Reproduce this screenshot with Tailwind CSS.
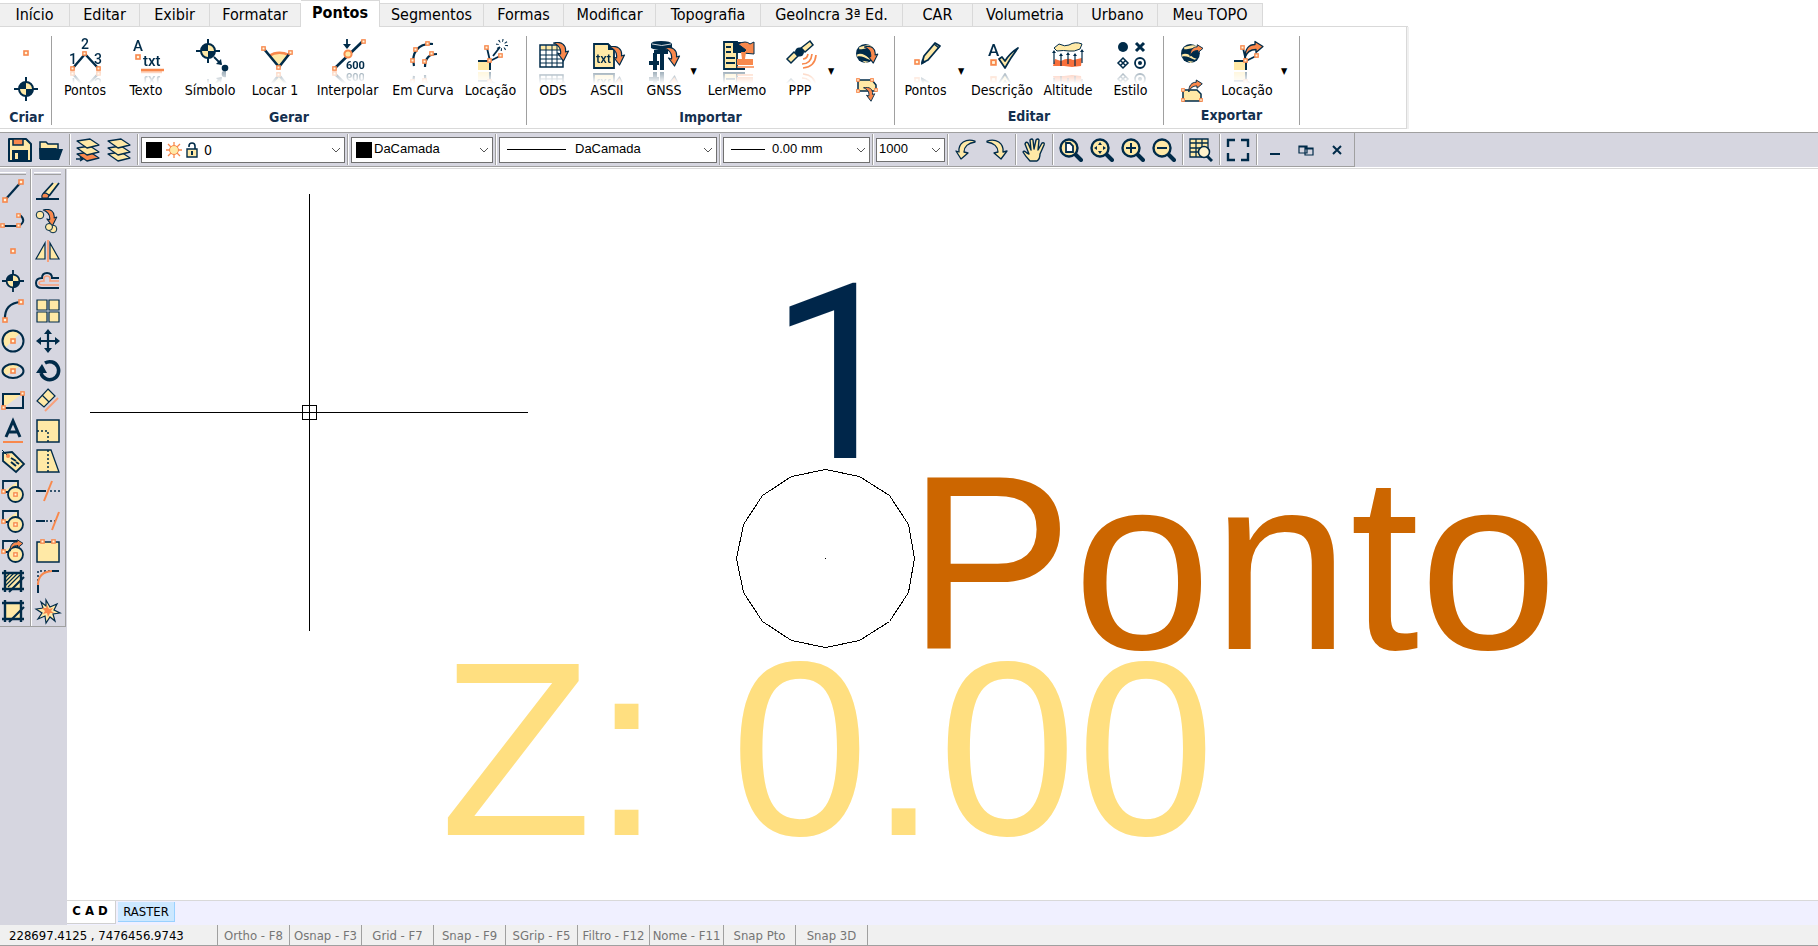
<!DOCTYPE html>
<html lang="pt-BR">
<head>
<meta charset="utf-8">
<title>Topografia CAD - Pontos</title>
<script src="https://cdn.jsdelivr.net/npm/@tailwindcss/browser@4"></script>
</head>
<body class="flex h-screen flex-col overflow-hidden bg-white font-['DejaVu_Sans_Condensed','DejaVu_Sans',sans-serif] text-sm text-black">

<!-- Icon library -->
<svg class="hidden" aria-hidden="true">
  <defs>
    <symbol id="sq" viewBox="0 0 6 6"><rect x="1" y="1" width="4" height="4" fill="#fff6dc" stroke="#f8884c" stroke-width="1.6"/></symbol>
    <symbol id="target" viewBox="0 0 24 24"><path d="M12 0v24M0 12h24" stroke="#002b49" stroke-width="2"/><circle cx="12" cy="12" r="7" fill="#ffe9a6" stroke="#002b49" stroke-width="2"/><path d="M12 12V5a7 7 0 0 0-7 7zM12 12v7a7 7 0 0 0 7-7z" fill="#002b49"/></symbol>
    <symbol id="arrow-down" viewBox="0 0 16 20"><path d="M0 1C8-1 13 3 12 10l3-1-5 10-6-8 3 1C8 6 5 3 0 1z" fill="#f8884c" stroke="#002b49" stroke-width="1.2" stroke-linejoin="round"/></symbol>
    <symbol id="arrow-right" viewBox="0 0 20 18"><path d="M1 17C1 8 5 4 11 4V1l8 5-7 6V9C7 9 3 11 1 17z" fill="#f8884c" stroke="#002b49" stroke-width="1.3" stroke-linejoin="round"/></symbol>
    <symbol id="globe" viewBox="0 0 22 22"><circle cx="10" cy="11" r="9" fill="#002b49"/><path d="M4 5c4-1 8-3 12-1l1 2C12 5 8 7 4 7zM2 12c4-2 8 1 11 3l3 1-2 1C9 15 6 13 2 14zM7 18l6 1-3 1z" fill="#ffe9a6"/></symbol>
    <symbol id="zoom" viewBox="0 0 24 24"><path d="M16 16l6 6" stroke="#002b49" stroke-width="4" stroke-linecap="round"/><circle cx="10" cy="10" r="8.500" fill="#ffe9a6" stroke="#002b49" stroke-width="2.4"/></symbol>
    <symbol id="shapes" viewBox="0 0 24 24"><path d="M2 2h15v11H2z" fill="#dcdce4" stroke="#002b49" stroke-width="1.8"/><path d="M3 12L16 3v9z" fill="#ffe9a6"/><circle cx="14.500" cy="15.500" r="7.500" fill="#ffe9a6" stroke="#002b49" stroke-width="1.8"/><use href="#sq" x="12" y="13" width="5" height="5"/><use href="#sq" x="0" y="10" width="5" height="5"/></symbol>
    <symbol id="sheet" viewBox="0 0 24 24"><path d="M1 3l13-2 9 6-12 3z" fill="#ffe9a6" stroke="#002b49" stroke-width="1.3" stroke-linejoin="round"/></symbol>
    <symbol id="corner" viewBox="0 0 32 32"><path d="M3 23h12v8H3z" fill="#ffe9a6"/><path d="M3 22h12v9" fill="none" stroke="#002b49" stroke-width="2"/><path d="M12 9l3 13 10-5" fill="none" stroke="#002b49" stroke-width="1.800"/><use href="#sq" x="9" y="6" width="5" height="5"/><use href="#sq" x="12" y="19" width="5" height="5"/><use href="#sq" x="23" y="14" width="5" height="5"/></symbol>
    <symbol id="hatch-frame" viewBox="0 0 24 24"><path d="M4 4h15v15H4z" fill="#ffe9a6"/><path d="M4 1v22M20 1v22M1 4h22M1 20h22" stroke="#002b49" stroke-width="2.4"/><path d="M8 23L23 8" stroke="#002b49" stroke-width="2.200"/></symbol>
  </defs>
</svg>

<header class="shrink-0">
  <!-- Tabs -->
  <nav class="flex h-[27px] items-end text-base/6 [&>button]:h-6 [&>button]:shrink-0 [&>button]:pb-px [&>button]:leading-5 [&>button]:whitespace-nowrap [&>button]:border-t [&>button]:border-r [&>button]:border-[#d9d9d9]" aria-label="Menu">
    <button class="w-[70px] border-b bg-[#f0f0f0]">Início</button>
    <button class="w-[70px] border-b bg-[#f0f0f0]">Editar</button>
    <button class="w-[70px] border-b bg-[#f0f0f0]">Exibir</button>
    <button class="w-[91px] border-b bg-[#f0f0f0]">Formatar</button>
    <div class="h-[27px] w-[79px] shrink-0 border-t border-r border-[#d9d9d9] bg-white"><button class="size-full pb-[2px] font-bold">Pontos</button></div>
    <button class="w-[104px] border-b bg-[#f0f0f0]">Segmentos</button>
    <button class="w-[80px] border-b bg-[#f0f0f0]">Formas</button>
    <button class="w-[92px] border-b bg-[#f0f0f0]">Modificar</button>
    <button class="w-[105px] border-b bg-[#f0f0f0]">Topografia</button>
    <button class="w-[142px] border-b bg-[#f0f0f0]">GeoIncra 3ª Ed.</button>
    <button class="w-[70px] border-b bg-[#f0f0f0]">CAR</button>
    <button class="w-[105px] border-b bg-[#f0f0f0]">Volumetria</button>
    <button class="w-[80px] border-b bg-[#f0f0f0]">Urbano</button>
    <button class="w-[105px] border-b bg-[#f0f0f0]">Meu TOPO</button>
    <span class="w-[145px] shrink-0 border-b border-[#d9d9d9]"></span>
  </nav>

  <!-- Ribbon -->
  <div class="w-fit border-r-2 border-[#f0f0f0]">
  <div class="flex h-[102px] w-[1407px] border-r border-b border-[#d9d9d9] pt-[9px] pb-[3px] [&_h2]:text-center [&_h2]:text-sm/4 [&_h2]:font-bold [&_h2]:text-[#14304f] [&>section]:flex [&>section]:flex-col [&>section]:justify-between [&>section]:border-r [&>section]:border-[#a0a0a0] [&_button]:flex [&_button]:shrink-0 [&_button]:flex-col [&_button]:items-center [&_button]:whitespace-nowrap [&_button]:leading-4 [&_svg]:overflow-visible">
    <section class="w-[52px]">
      <div class="flex flex-col items-center gap-[13px] pt-1">
        <button aria-label="Ponto"><svg class="size-6" viewBox="0 0 24 24"><use href="#sq" x="9" y="10" width="6" height="6"/></svg></button>
        <button aria-label="Símbolo"><svg class="size-6"><use href="#target"/></svg></button>
      </div>
      <h2 class="pl-[2px]">Criar</h2>
    </section>

    <section>
      <div class="flex pt-[3px] [&_svg]:mb-[11px] [&_svg]:size-8 [&_svg]:[-webkit-box-reflect:below_0_linear-gradient(transparent_60%,#00000066)]">
        <button class="w-[66px]"><svg viewBox="0 0 32 32"><path d="M4 29l12-14 13 14" fill="none" stroke="#002b49" stroke-width="2.400"/><g font-family="Roboto" font-size="14" font-weight="500" fill="#002b49"><text x="12" y="10">2</text><text x="0" y="25">1</text><text x="25" y="25">3</text></g><use href="#sq" x="1" y="27" width="5" height="5"/><use href="#sq" x="13" y="12" width="5" height="5"/><use href="#sq" x="27" y="27" width="5" height="5"/></svg>Pontos</button>
        <button class="w-[56px]"><svg viewBox="0 0 32 32"><g font-family="Roboto" fill="#002b49" font-weight="500"><text x="3" y="12" font-size="15">A</text><text x="13" y="27" font-size="15">txt</text></g><use href="#sq" x="5" y="15" width="6" height="6"/><path d="M11 31h23" stroke="#f8884c" stroke-width="2.500"/></svg>Texto</button>
        <button class="w-[72px]"><svg viewBox="0 0 32 32"><use href="#target" x="2" y="0" width="24" height="24"/><path d="M20 18l7 7" stroke="#002b49" stroke-width="1.800"/><path d="M28 26l-6-1 5-5z" fill="#002b49"/><circle cx="31" cy="29" r="3.300" fill="#002b49"/></svg>Símbolo</button>
        <button class="w-[58px]"><svg viewBox="0 0 32 32"><path d="M20 28L10 17q9-6 19-1z" fill="#ffe9a6"/><path d="M10 17q9-6 20-1" fill="none" stroke="#f8884c" stroke-width="2.500"/><path d="M5 10l15 18 11-14" fill="none" stroke="#002b49" stroke-width="2.600"/><use href="#sq" x="2" y="7" width="5" height="5"/><use href="#sq" x="17" y="26" width="5" height="5"/><use href="#sq" x="29" y="11" width="5" height="5"/></svg>Locar 1</button>
        <button class="w-[87px]"><svg viewBox="0 0 32 32"><path d="M3 29L31 2" stroke="#002b49" stroke-width="2.600"/><path d="M15 0v8" stroke="#002b49" stroke-width="1.800"/><path d="M11 5h8l-4 5z" fill="#002b49"/><circle cx="16" cy="15" r="3.600" fill="#ffe9a6" stroke="#f8884c" stroke-width="2"/><text x="14" y="30" font-family="Roboto" font-size="11" font-weight="700" fill="#002b49">600</text><use href="#sq" x="0" y="27" width="5" height="5"/><use href="#sq" x="29" y="0" width="5" height="5"/></svg>Interpolar</button>
        <button class="w-[64px]"><svg viewBox="0 0 32 32"><path d="M7 27C4 14 11 4 26 5M18 28c0-9 4-13 12-13" fill="none" stroke="#002b49" stroke-width="2.200"/><use href="#sq" x="3" y="19" width="5" height="5"/><use href="#sq" x="6" y="8" width="5" height="5"/><use href="#sq" x="18" y="2" width="5" height="5"/><use href="#sq" x="15" y="20" width="5" height="5"/><use href="#sq" x="22" y="12" width="5" height="5"/></svg>Em Curva</button>
        <button class="w-[71px]"><svg viewBox="0 0 32 32"><use href="#corner" width="32" height="32"/><path d="M18 17l7-9" stroke="#002b49" stroke-width="1.800"/><circle cx="27" cy="6" r="4.500" fill="none" stroke="#002b49" stroke-width="3" stroke-dasharray="1 2.500"/></svg>Locação</button>
      </div>
      <h2>Gerar</h2>
    </section>

    <section>
      <div class="flex">
        <div class="flex pt-[3px] [&_svg]:mb-[11px] [&_svg]:size-8 [&_svg]:[-webkit-box-reflect:below_0_linear-gradient(transparent_60%,#00000066)]">
          <button class="w-[52px]"><svg viewBox="0 0 32 32"><path d="M3 6h23v22H3z" fill="#fff" stroke="#002b49" stroke-width="1.500"/><path d="M4 7h21v4H4z" fill="#ffe9a6"/><path d="M3 11h23M3 16h23M3 20h23M3 24h23M9 6v22M15 6v22M20 6v22" stroke="#002b49"/><use href="#arrow-down" x="16" y="3" width="17" height="20"/></svg>ODS</button>
          <button class="w-[56px]"><svg viewBox="0 0 32 32"><path d="M3 5h14l6 6v18H3z" fill="#ffe9a6" stroke="#002b49" stroke-width="1.800"/><path d="M17 5v6h6z" fill="#002b49"/><text x="5" y="24" font-family="Roboto" font-size="13" font-weight="500" fill="#002b49">txt</text><use href="#arrow-down" x="18" y="7" width="17" height="20"/></svg>ASCII</button>
          <button class="ml-[5px] w-[48px]"><svg viewBox="0 0 32 32"><path d="M3 5q0-3 10-3t11 3v4q-3 2-10 2T3 9z" fill="#002b49"/><path d="M6 11h14v4H6z" fill="#002b49"/><path d="M7 14v17M14 14v17M1 24h10" stroke="#002b49" stroke-width="4"/><path d="M4 5q10 3 19 0" fill="none" stroke="#cfd6dc"/><use href="#arrow-down" x="16" y="8" width="17" height="20"/></svg>GNSS</button>
        </div>
        <button class="w-[11px] pt-[27px] text-[9px]" aria-label="Mais opções GNSS">▼</button>
        <div class="flex pt-[3px] [&_svg]:mb-[11px] [&_svg]:size-8 [&_svg]:[-webkit-box-reflect:below_0_linear-gradient(transparent_60%,#00000066)]">
          <button class="w-[76px]"><svg viewBox="0 0 32 32"><path d="M3 3h13v27H3z" fill="#ffe9a6" stroke="#002b49" stroke-width="1.800"/><path d="M12 3h12v11H12z" fill="#002b49"/><path d="M5 8h5M5 13h5M5 19h9M5 24h9M3 30h21" stroke="#002b49" stroke-width="2"/><path d="M17 5q8-4 12 0l4-2v12l-11-1 3-3q-4-3-8-6z" fill="#f8884c" stroke="#002b49"/><path d="M20 13h5l-1 7h8v6H16v-6h5z" fill="#f8884c"/><path d="M16 28h17" stroke="#f8884c" stroke-width="1.500"/></svg>LerMemo</button>
          <button class="w-[50px]"><svg viewBox="0 0 32 32"><g fill="#ffe9a6" stroke="#002b49" stroke-width="1.500"><path d="M3 20l7-7 4 4-7 7zM17 9l9-7 3 4-8 7z"/></g><circle cx="15.500" cy="13" r="4.500" fill="#002b49"/><path d="M19 20q4 0 5-5M18 25q9 0 10-10M19 29q12-1 13-13" fill="none" stroke="#f8884c" stroke-width="1.700"/></svg>PPP</button>
        </div>
        <button class="w-3 pt-[27px] text-[9px]" aria-label="Mais opções PPP">▼</button>
        <div class="flex w-[57px] flex-col items-center gap-3 pt-[6px] pl-[2px]">
          <button aria-label="Importar do Google Earth"><svg class="size-6" viewBox="0 0 24 24"><use href="#globe" width="23" height="23"/><use href="#arrow-down" x="9" y="4" width="15" height="18"/></svg></button>
          <button aria-label="Importar polígono"><svg class="size-6" viewBox="0 0 24 24"><path d="M3 2h14l4 5v6H3z" fill="#ffe9a6" stroke="#002b49" stroke-width="1.500"/><use href="#sq" x="1" y="0" width="4" height="4"/><use href="#sq" x="15" y="0" width="4" height="4"/><use href="#sq" x="1" y="11" width="4" height="4"/><use href="#sq" x="19" y="10" width="4" height="4"/><use href="#arrow-down" x="8" y="9" width="13" height="15"/></svg></button>
        </div>
      </div>
      <h2>Importar</h2>
    </section>

    <section class="pb-px">
      <div class="flex">
        <div class="flex pt-[3px] [&_svg]:mb-[11px] [&_svg]:size-8 [&_svg]:[-webkit-box-reflect:below_0_linear-gradient(transparent_60%,#00000066)]">
          <button class="w-[61px]"><svg viewBox="0 0 32 32"><path d="M12 24l2-7L25 4l5 3-12 14z" fill="#ffe9a6" stroke="#002b49" stroke-width="1.800" stroke-linejoin="round"/><path d="M24 5l5 4" stroke="#002b49" stroke-width="1.500"/><path d="M11 26l1-6 4 3z" fill="#002b49"/><use href="#sq" x="4" y="20" width="6" height="6"/></svg>Pontos</button>
        </div>
        <button class="w-[10px] pt-[27px] text-[9px]" aria-label="Mais opções de edição">▼</button>
        <div class="flex pt-[3px] [&_svg]:mb-[11px] [&_svg]:size-8 [&_svg]:[-webkit-box-reflect:below_0_linear-gradient(transparent_60%,#00000066)]">
          <button class="w-[72px]"><svg viewBox="0 0 32 32"><text x="2" y="17" font-family="Roboto" font-size="17" font-weight="500" fill="#002b49">A</text><use href="#sq" x="4" y="20" width="7" height="7"/><path d="M13 20l3-2 3 4q5-8 13-13-7 9-13 20z" fill="#ffe9a6" stroke="#002b49" stroke-width="1.700" stroke-linejoin="round"/></svg>Descrição</button>
          <button class="w-[60px]"><svg viewBox="0 0 32 32"><path d="M2 9l5-4q6 3 10 1 6-4 13-1l-2 5q-6 3-11 2t-12 0z" fill="#ffe9a6" stroke="#002b49"/><path d="M1 27l2-7 6 2q7-4 12-1l9-2-1 8-9 1-8-1z" fill="#f8703c"/><path d="M2 25V13M9 27V17M16 25V15M23 27V17M30 24V12" stroke="#002b49" stroke-width="1.200"/><path d="M0 14l2-3 2 3zM7 17l2-3 2 3zM14 16l2-3 2 3zM21 17l2-3 2 3zM28 13l2-3 2 3z" fill="#002b49"/></svg>Altitude</button>
          <button class="w-[65px]"><svg viewBox="0 0 32 32"><circle cx="8" cy="8" r="5" fill="#002b49"/><path d="M21 4l8 8M29 4l-8 8" stroke="#002b49" stroke-width="3"/><path d="M8 19l5 5-5 5-5-5zM5.500 21.500l5 5M10.500 21.500l-5 5" fill="none" stroke="#002b49" stroke-width="1.500"/><circle cx="25" cy="24" r="5" fill="none" stroke="#002b49" stroke-width="1.800"/><circle cx="25" cy="24" r="2" fill="#002b49"/></svg>Estilo</button>
        </div>
      </div>
      <h2>Editar</h2>
    </section>

    <section class="pb-[2px]">
      <div class="flex pr-2">
        <div class="flex w-[53px] flex-col items-center gap-3 pt-[6px] pl-[2px]">
          <button aria-label="Exportar para Google Earth"><svg class="size-6" viewBox="0 0 24 24"><use href="#globe" width="23" height="23"/><use href="#arrow-right" x="9" y="2" width="15" height="13"/></svg></button>
          <button aria-label="Exportar polígono"><svg class="size-6" viewBox="0 0 24 24"><path d="M3 12h14l4 4v7H3z" fill="#ffe9a6" stroke="#002b49" stroke-width="1.500"/><use href="#sq" x="1" y="10" width="4" height="4"/><use href="#sq" x="1" y="20" width="4" height="4"/><use href="#sq" x="19" y="20" width="4" height="4"/><use href="#arrow-right" x="8" y="1" width="15" height="14"/></svg></button>
        </div>
        <div class="flex pt-[3px] [&_svg]:mb-[11px] [&_svg]:size-8 [&_svg]:[-webkit-box-reflect:below_0_linear-gradient(transparent_60%,#00000066)]">
          <button class="w-[60px]"><svg viewBox="0 0 32 32"><use href="#corner" width="32" height="32"/><use href="#arrow-right" x="13" y="1" width="20" height="19"/></svg>Locação</button>
        </div>
        <button class="w-[14px] pt-[27px] text-[9px]" aria-label="Mais opções de exportação">▼</button>
      </div>
      <h2>Exportar</h2>
    </section>
  </div>
  </div>

  <!-- Property bar -->
  <div class="border-b border-[#d9d9d9] bg-white pb-px">
  <div class="mt-[3px] h-[35px] border-t border-[#a0a0a0] bg-[#d6d6e0] [&_select]:h-full [&_select]:w-full [&_select]:appearance-none [&_select]:border [&_select]:border-[#707070] [&_select]:bg-white [&_select]:outline-none">
    <div class="flex h-[34px] w-fit items-center border-r border-b border-[#a0a0a0] pl-[5px] [&>button]:flex [&>button]:size-[31px] [&>button]:shrink-0 [&>button]:items-center [&>button]:justify-center [&>button]:pr-[2px] [&>button>svg]:size-6 [&>hr]:mx-[2px] [&>hr]:h-[31px] [&>hr]:w-[2px] [&>hr]:border-0 [&>hr]:border-l [&>hr]:border-[#a0a0a0] [&>hr]:bg-white">
      <button aria-label="Salvar"><svg viewBox="0 0 24 24"><path d="M1 1h17l5 5v17H1z" fill="#ffe9a6" stroke="#002b49" stroke-width="2" stroke-linejoin="round"/><path d="M5 1h10v6H5z" fill="#f8884c" stroke="#002b49" stroke-width="1.500"/><path d="M4 12h16v11H4z" fill="#002b49"/><path d="M7 15h3v6H7z" fill="#ffe9a6"/></svg></button>
      <button aria-label="Abrir"><svg viewBox="0 0 24 24"><path d="M1 21V4h6l2 2h10v6" fill="#ffe9a6" stroke="#002b49" stroke-width="1.500"/><path d="M0 10h17l2 1h5l-4 11H1z" fill="#002b49"/></svg></button>
      <hr>
      <button aria-label="Camada atual"><svg viewBox="0 0 24 24"><path d="M1 16l13-2 9 6-12 3z" fill="#f8884c" stroke="#002b49" stroke-width="1.300" stroke-linejoin="round"/><use href="#sheet" y="7" width="24" height="24"/><use href="#sheet" width="24" height="24"/><path d="M0 21h6M4 19l3 2-3 2" fill="none" stroke="#002b49" stroke-width="1.500"/></svg></button>
      <button aria-label="Camadas"><svg viewBox="0 0 24 24"><path d="M1 16l13-2 9 6-12 3z" fill="#ffe9a6" stroke="#002b49" stroke-width="1.300" stroke-linejoin="round"/><use href="#sheet" y="7" width="24" height="24"/><use href="#sheet" width="24" height="24"/></svg></button>
      <hr>
      <div class="relative h-[26px] w-[204px]">
        <select class="pl-[62px] text-sm" aria-label="Camada"><option>0</option></select>
        <span class="pointer-events-none absolute inset-0 flex items-center pl-[5px]"><span class="mr-1 size-4 bg-black"></span><svg class="mr-1 size-4" viewBox="0 0 16 16"><path d="M8 0v16M0 8h16M2 2l12 12M14 2L2 14" stroke="#f8884c" stroke-width="1.300"/><circle cx="8" cy="8" r="4.500" fill="#ffe9a6" stroke="#f8884c"/></svg><svg class="h-4 w-3" viewBox="0 0 12 16"><path d="M3 5V4q0-3 3-3t3 3v3" fill="none" stroke="#002b49" stroke-width="1.600"/><path d="M1 7h10v8H1z" fill="#ffe9a6" stroke="#002b49" stroke-width="1.400"/><path d="M6 9v4" stroke="#002b49" stroke-width="2"/></svg><svg class="mr-1 ml-auto size-2.5" viewBox="0 0 10 10"><path d="M1 3l4 4 4-4" fill="none" stroke="#555"/></svg></span>
      </div>
      <hr>
      <div class="relative h-[26px] w-[142px]">
        <select class="pl-[22px] font-['Liberation_Sans',sans-serif] text-[13px]" aria-label="Cor"><option>DaCamada</option></select>
        <span class="pointer-events-none absolute inset-0 flex items-center pl-[5px]"><span class="size-4 bg-black"></span><svg class="mr-1 ml-auto size-2.5" viewBox="0 0 10 10"><path d="M1 3l4 4 4-4" fill="none" stroke="#555"/></svg></span>
      </div>
      <hr>
      <div class="relative h-[26px] w-[218px]">
        <select class="pl-[75px] font-['Liberation_Sans',sans-serif] text-[13px]" aria-label="Tipo de linha"><option>DaCamada</option></select>
        <span class="pointer-events-none absolute inset-0 flex items-center pl-2"><span class="h-px w-[59px] bg-black"></span><svg class="mr-1 ml-auto size-2.5" viewBox="0 0 10 10"><path d="M1 3l4 4 4-4" fill="none" stroke="#555"/></svg></span>
      </div>
      <hr>
      <div class="relative h-[26px] w-[147px]">
        <select class="pl-12 font-['Liberation_Sans',sans-serif] text-[13px]" aria-label="Espessura"><option>0.00 mm</option></select>
        <span class="pointer-events-none absolute inset-0 flex items-center pl-2"><span class="h-px w-[34px] bg-black"></span><svg class="mr-1 ml-auto size-2.5" viewBox="0 0 10 10"><path d="M1 3l4 4 4-4" fill="none" stroke="#555"/></svg></span>
      </div>
      <hr>
      <div class="relative h-6 w-[69px]">
        <select class="pl-[2px] font-['Liberation_Sans',sans-serif] text-[13px]" aria-label="Escala"><option>1000</option></select>
        <span class="pointer-events-none absolute inset-0 flex items-center"><svg class="mr-1 ml-auto size-2.5" viewBox="0 0 10 10"><path d="M1 3l4 4 4-4" fill="none" stroke="#555"/></svg></span>
      </div>
      <hr>
      <button aria-label="Desfazer"><svg viewBox="0 0 24 24"><path d="M21 3C12 0 4 5 5 14l-3-1 5 8 7-6-4-1C10 9 14 5 21 4z" fill="#ffe9a6" stroke="#002b49" stroke-width="1.300" stroke-linejoin="round"/></svg></button>
      <button aria-label="Refazer"><svg viewBox="0 0 24 24"><path d="M2 3c9-3 17 2 16 11l4-1-6 8-7-6 4-1C13 9 9 5 2 4z" fill="#ffe9a6" stroke="#002b49" stroke-width="1.300" stroke-linejoin="round"/></svg></button>
      <hr>
      <button aria-label="Mover vista"><svg viewBox="0 0 24 24"><path d="M8 23q-4-4-7-9 1-2 4 1l2 1L3 6q1-3 3-1l3 7L8 2q2-2 3 0l1 9 2-9q2-2 3 0l-1 10 4-7q3-1 2 2l-4 9q0 5-3 7z" fill="#ffe9a6" stroke="#002b49" stroke-width="1.400" stroke-linejoin="round"/></svg></button>
      <hr>
      <button aria-label="Zoom página"><svg viewBox="0 0 24 24"><use href="#zoom"/><path d="M7 5h4l3 3v6H7z" fill="#fff" stroke="#002b49" stroke-width="1.800"/></svg></button>
      <button aria-label="Zoom extensão"><svg viewBox="0 0 24 24"><use href="#zoom"/><path d="M10 4l2 3H8zM10 16l2-3H8zM4 10l3-2v4zM16 10l-3-2v4z" fill="#002b49"/></svg></button>
      <button aria-label="Mais zoom"><svg viewBox="0 0 24 24"><use href="#zoom"/><path d="M10 5v10M5 10h10" stroke="#002b49" stroke-width="2"/></svg></button>
      <button aria-label="Menos zoom"><svg viewBox="0 0 24 24"><use href="#zoom"/><path d="M5 10h10" stroke="#002b49" stroke-width="2"/></svg></button>
      <hr>
      <button aria-label="Localizar na tabela"><svg viewBox="0 0 24 24"><path d="M1 1h18v18H1z" fill="#ffe9a6"/><path d="M1 1h18v18H1zM1 5h18M1 10h18M1 14h18M7 1v18M13 1v18" fill="none" stroke="#002b49" stroke-width="1.300"/><path d="M18 18l5 5" stroke="#002b49" stroke-width="3"/><circle cx="15" cy="14" r="5.500" fill="#fff3cc" stroke="#002b49" stroke-width="1.500"/></svg></button>
      <hr>
      <button aria-label="Tela cheia"><svg viewBox="0 0 24 24"><path d="M2 9V2h7M15 2h7v7M22 15v7h-7M9 22H2v-7" fill="none" stroke="#002b49" stroke-width="2.400"/></svg></button>
      <hr>
      <button aria-label="Minimizar"><svg viewBox="0 0 24 24"><path d="M7 16h10" stroke="#002b49" stroke-width="2"/></svg></button>
      <button aria-label="Restaurar"><svg viewBox="0 0 24 24"><path d="M5 8h8v7H5zM11 10h8v7h-8zM5 9h8M11 11h8" fill="none" stroke="#002b49" stroke-width="1.200"/></svg></button>
      <button class="mr-px" aria-label="Fechar"><svg viewBox="0 0 24 24"><path d="M8 8l8 8M16 8l-8 8" stroke="#002b49" stroke-width="2"/></svg></button>
    </div>
  </div>
  </div>
</header>

<main class="flex min-h-0 flex-1">
  <!-- Tool palettes -->
  <aside class="w-[67px] shrink-0 bg-[#d6d6e0]">
    <div class="flex w-[66px] border-b border-[#a0a0a0] [&_button]:flex [&_button]:h-[30px] [&_button]:w-full [&_button]:items-center [&_button]:justify-center [&_button>svg]:size-6 [&_svg]:overflow-visible">
      <div class="w-[31px] border-r border-[#a0a0a0] pt-[3px] pr-[4px]">
        <div class="mb-px h-[3px] border-y border-t-white border-b-[#a0a0a0]"></div>
        <button aria-label="Linha"><svg viewBox="0 0 24 24"><path d="M4 21L20 3" stroke="#002b49" stroke-width="2.200"/><use href="#sq" x="1" y="18" width="6" height="6"/><use href="#sq" x="17" y="0" width="6" height="6"/></svg></button>
        <button aria-label="Polilinha"><svg viewBox="0 0 24 24"><path d="M2 17h16q8-5 1-11" fill="none" stroke="#002b49" stroke-width="2"/><use href="#sq" x="-1" y="14" width="5" height="5"/><use href="#sq" x="15" y="14" width="5" height="5"/><use href="#sq" x="15" y="4" width="5" height="5"/></svg></button>
        <button aria-label="Ponto"><svg viewBox="0 0 24 24"><use href="#sq" x="9" y="9" width="6" height="6"/></svg></button>
        <button aria-label="Símbolo"><svg viewBox="0 0 24 24"><use href="#target" x="1" y="1" width="22" height="22"/></svg></button>
        <button aria-label="Arco"><svg viewBox="0 0 24 24"><path d="M4 21Q3 4 20 3" fill="none" stroke="#002b49" stroke-width="2.200"/><use href="#sq" x="1" y="18" width="6" height="6"/><use href="#sq" x="17" y="0" width="6" height="6"/></svg></button>
        <button aria-label="Círculo"><svg viewBox="0 0 24 24"><circle cx="12" cy="12" r="10.500" fill="#dcdce4"/><path d="M4 19A10.500 10.500 0 0 1 19 4z" fill="#ffe9a6"/><circle cx="12" cy="12" r="10.500" fill="none" stroke="#002b49" stroke-width="2"/><use href="#sq" x="9" y="9" width="6" height="6"/></svg></button>
        <button aria-label="Elipse"><svg viewBox="0 0 24 24"><ellipse cx="12" cy="12" rx="10.500" ry="7" fill="#dcdce4"/><path d="M4 17A10.500 7 0 0 1 19 7z" fill="#ffe9a6"/><ellipse cx="12" cy="12" rx="10.500" ry="7" fill="none" stroke="#002b49" stroke-width="2"/><use href="#sq" x="9" y="9" width="6" height="6"/></svg></button>
        <button aria-label="Retângulo"><svg viewBox="0 0 24 24"><path d="M2 5h20v14H2z" fill="#dcdce4"/><path d="M2 19L21 5H2z" fill="#ffe9a6"/><path d="M2 5h20v14H2z" fill="none" stroke="#002b49" stroke-width="2"/><use href="#sq" x="0" y="16" width="5" height="5"/><use href="#sq" x="19" y="2" width="5" height="5"/></svg></button>
        <button aria-label="Texto"><svg viewBox="0 0 24 24"><path d="M5 18L12 2l7 16M8 13h8" fill="none" stroke="#002b49" stroke-width="3"/><path d="M2 23h20" stroke="#f8884c" stroke-width="2"/></svg></button>
        <button aria-label="Etiqueta"><svg viewBox="0 0 24 24"><path d="M2 4l9-1 12 12-8 8L2 12z" fill="#ffe9a6" stroke="#002b49" stroke-width="1.800"/><path d="M1 1l6 6" stroke="#002b49"/><circle cx="7" cy="7" r="2" fill="#f8884c"/><path d="M10 9l5 3M10 13l5 4M15 13l3 2" stroke="#002b49" stroke-width="2"/></svg></button>
        <button aria-label="Bloco"><svg><use href="#shapes"/></svg></button>
        <button aria-label="Inserir bloco"><svg><use href="#shapes"/></svg></button>
        <button aria-label="Exportar bloco"><svg viewBox="0 0 24 24"><use href="#shapes" width="24" height="24"/><use href="#arrow-right" x="8" y="0" width="15" height="13"/></svg></button>
        <button aria-label="Hachura"><svg viewBox="0 0 24 24"><use href="#hatch-frame" width="24" height="24"/><path d="M4 9l5-5M4 13l9-9M4 17L17 4M7 18L19 6" stroke="#002b49" stroke-width="1.200"/></svg></button>
        <button aria-label="Contorno"><svg><use href="#hatch-frame"/></svg></button>
      </div>
      <div class="w-[35px] border-r border-[#a0a0a0] border-l border-l-white pt-[3px] pr-[4px] pl-[2px]">
        <div class="mb-px h-[3px] border-y border-t-white border-b-[#a0a0a0]"></div>
        <button aria-label="Apagar"><svg viewBox="0 0 24 24"><path d="M6 16L17 4h6L13 17z" fill="#ffe9a6"/><path d="M7 15L17 4M13 17L23 4" stroke="#002b49" stroke-width="1.800"/><path d="M6 19q-1-5 4-5l3 2-1 3z" fill="#f8884c" stroke="#002b49" stroke-width="1.200"/><path d="M0 20h23" stroke="#002b49" stroke-width="2"/></svg></button>
        <button aria-label="Copiar"><svg viewBox="0 0 24 24"><use href="#arrow-down" x="5" y="0" width="19" height="18"/><g fill="#ffe9a6" stroke="#002b49"><circle cx="4" cy="6" r="3.800"/><circle cx="17" cy="20" r="3.800"/><circle cx="13" cy="18" r="3.500"/></g></svg></button>
        <button aria-label="Espelhar"><svg viewBox="0 0 24 24"><path d="M9 4v16H0zM14 4v16h9z" fill="#ffe9a6" stroke="#002b49" stroke-width="1.200"/><path d="M12 1v22" stroke="#f8a07a" stroke-width="2"/></svg></button>
        <button aria-label="Deslocar"><svg viewBox="0 0 24 24"><path d="M23 9h-7q0-5-5-5T6 9Q0 9 0 14t6 5h17" fill="none" stroke="#002b49" stroke-width="2"/><path d="M23 12h-9q1-5-3-5t-3 5q-5 0-5 2t4 2h16" fill="none" stroke="#f8a07a" stroke-width="1.600"/></svg></button>
        <button aria-label="Matriz"><svg viewBox="0 0 24 24"><path d="M1 1h10v10H1zM13 1h10v10H13zM1 13h10v10H1zM13 13h10v10H13z" fill="#ffe9a6" stroke="#002b49" stroke-width="1.200"/></svg></button>
        <button aria-label="Mover"><svg viewBox="0 0 24 24"><path d="M12 3v18M3 12h18" stroke="#002b49" stroke-width="2.200"/><path d="M12 0l4 5H8zM12 24l4-5H8zM0 12l5-4v8zM24 12l-5-4v8z" fill="#002b49"/></svg></button>
        <button aria-label="Girar"><svg viewBox="0 0 24 24"><path d="M9 4a9 9 0 1 1-4 10" fill="none" stroke="#002b49" stroke-width="3.500"/><path d="M0 14l6-9 5 9z" fill="#002b49"/></svg></button>
        <button aria-label="Alinhar"><svg viewBox="0 0 24 24"><path d="M12 0l7 7-11 11-7-6z" fill="#ffe9a6" stroke="#002b49" stroke-width="1.200"/><path d="M6 6l7 7" stroke="#002b49" stroke-width="1.200"/><path d="M9 22L22 9" stroke="#f8a07a" stroke-width="2"/></svg></button>
        <button aria-label="Escala"><svg viewBox="0 0 24 24"><path d="M1 1h22v22H1z" fill="#ffe9a6" stroke="#002b49" stroke-width="1.500"/><path d="M1 12h11v11" fill="none" stroke="#002b49" stroke-width="1.500" stroke-dasharray="2 2"/></svg></button>
        <button aria-label="Esticar"><svg viewBox="0 0 24 24"><path d="M1 1h14l8 22H1z" fill="#ffe9a6" stroke="#002b49" stroke-width="1.300"/><path d="M12 1v22" stroke="#002b49" stroke-width="1.500" stroke-dasharray="2 2"/></svg></button>
        <button aria-label="Aparar"><svg viewBox="0 0 24 24"><path d="M0 12h10" stroke="#002b49" stroke-width="2"/><path d="M14 12h10" stroke="#002b49" stroke-width="1.500" stroke-dasharray="2 2"/><path d="M16 2L8 22" stroke="#f8884c" stroke-width="2"/></svg></button>
        <button aria-label="Estender"><svg viewBox="0 0 24 24"><path d="M0 12h9" stroke="#002b49" stroke-width="2"/><path d="M10 12h9" stroke="#002b49" stroke-width="1.500" stroke-dasharray="2 2"/><path d="M23 3l-7 18" stroke="#f8884c" stroke-width="2"/></svg></button>
        <button aria-label="Quebrar"><svg viewBox="0 0 24 24"><path d="M1 3h22v20H1z" fill="#ffe9a6" stroke="#002b49" stroke-width="1.500"/><use href="#sq" x="4" y="0" width="5" height="5"/><use href="#sq" x="15" y="0" width="5" height="5"/></svg></button>
        <button aria-label="Concordar"><svg viewBox="0 0 24 24"><path d="M2 16V2h14" fill="none" stroke="#002b49" stroke-width="1.500" stroke-dasharray="2 2"/><path d="M2 16Q2 3 16 2" fill="none" stroke="#f8884c" stroke-width="2"/><path d="M2 16v8M16 2h7" stroke="#002b49" stroke-width="2"/></svg></button>
        <button aria-label="Explodir"><svg viewBox="0 0 24 24"><path d="M10 1l4 7 7-3-3 6 6 3-7 1 2 7-5-4-4 6-1-7-7 3 4-6-6-4 7-1-2-6 5 4z" fill="#ffe9a6" stroke="#002b49" stroke-width="1.200"/><path d="M11 6l2 4 4-1-2 3 3 2-4 0-2 4-1-4-4 1 2-3-3-3 4 0z" fill="#f8884c"/></svg></button>
      </div>
    </div>
  </aside>

  <div class="flex min-w-0 flex-1 flex-col">
    <!-- Drawing area -->
    <div class="relative min-h-0 flex-1 overflow-hidden">
      <svg class="absolute top-0 left-0 h-[730px] w-[1750px]" viewBox="67 169 1750 730" font-family="Liberation Sans, Arial, sans-serif" font-size="249">
        <g fill="none" stroke="#000" shape-rendering="crispEdges">
          <path d="M309.500 194v437M90 412.500h438M302.500 405.500h14v14h-14z"/>
          <path d="M825.500 469.500l34 7 30 19 19 29 6 34-6 34-19 29-30 19-34 7-34-7-29-19-19-29-7-34 7-34 19-29 29-19zM825 558.500h1"/>
        </g>
        <text x="769" y="458" fill="#00264a" font-family="Roboto, sans-serif" font-size="245">1</text>
        <text x="907" y="649" fill="#cc6600">Ponto</text>
        <text x="440" y="835" fill="#ffdf80">Z: 0.00</text>
      </svg>
    </div>
    <!-- Sheet tabs -->
    <div class="flex h-[25px] shrink-0 items-start border-t border-[#d9d9d9] bg-[#f0f0ff] text-[13px]/5">
      <button class="h-[23px] w-[49px] border-r border-b border-[#d0d0d0] bg-white pr-[2px] pb-[2px] text-center font-bold whitespace-nowrap">C A D</button>
      <button class="mt-px ml-[2px] h-5 w-[57px] border-r border-b border-[#99d1ff] bg-[#cce8ff] leading-[18px]">RASTER</button>
    </div>
  </div>
</main>

<!-- Status bar -->
<footer class="flex h-[21px] shrink-0 border-b border-[#a0a0a0] bg-[#f0f0f0] text-[13px]/5 text-[#757575] [&>button]:border-r [&>button]:border-[#a0a0a0] [&>button]:pt-px [&>button]:whitespace-nowrap">
  <div class="w-[218px] border-r border-[#a0a0a0] pt-px pl-[9px] text-black">228697.4125 , 7476456.9743</div>
  <button class="w-[72px]">Ortho - F8</button>
  <button class="w-[72px]">Osnap - F3</button>
  <button class="w-[72px]">Grid - F7</button>
  <button class="w-[72px]">Snap - F9</button>
  <button class="w-[72px]">SGrip - F5</button>
  <button class="w-[72px]">Filtro - F12</button>
  <button class="w-[74px]">Nome - F11</button>
  <button class="w-[72px]">Snap Pto</button>
  <button class="w-[72px]">Snap 3D</button>
</footer>
</body>
</html>
